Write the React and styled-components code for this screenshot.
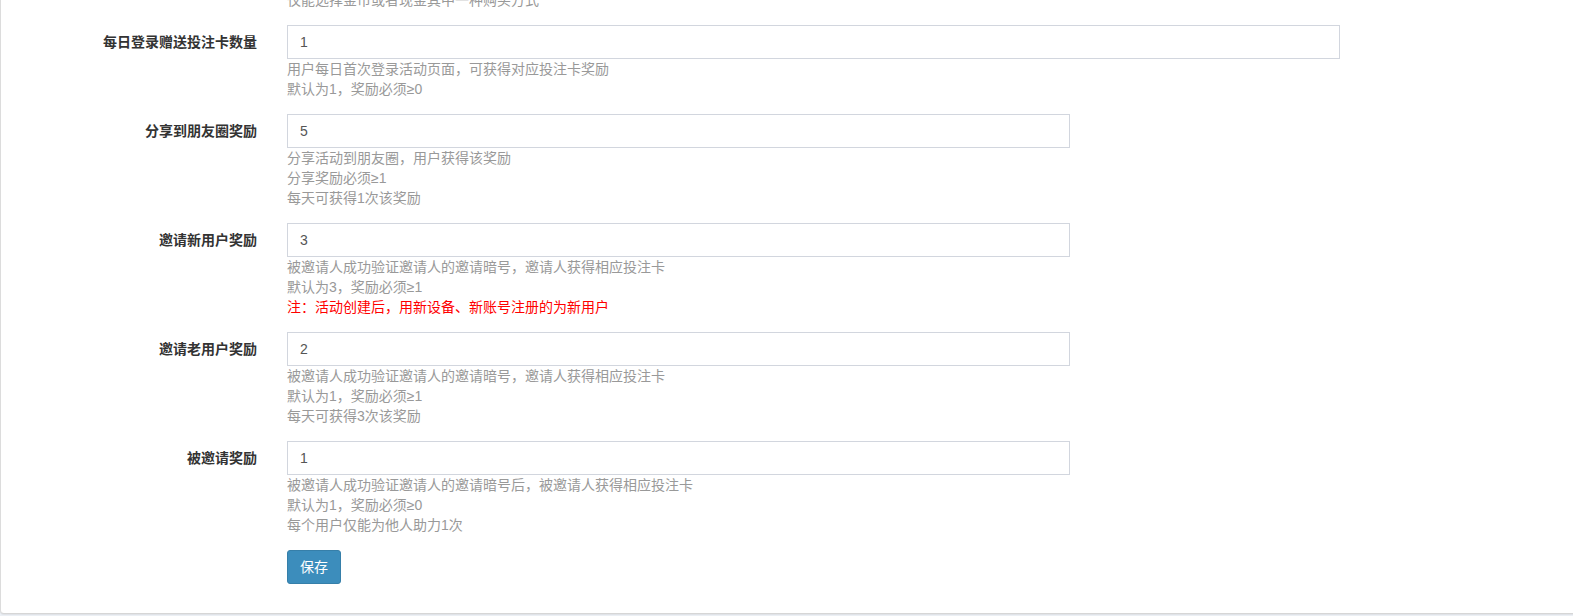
import styled, { createGlobalStyle } from "styled-components";

const GlobalStyle = createGlobalStyle`
  html, body {
    margin: 0;
    padding: 0;
    background: #ecf0f5;
    overflow: hidden;
  }
  body {
    font-family: "Liberation Sans", "Noto Sans CJK SC", sans-serif;
    font-size: 14px;
    color: #333;
  }
`;

const Page = styled.div`
  height: 616px;
  overflow: hidden;
`;

const Box = styled.div`
  width: 1640px;
  margin-top: -10px;
  padding-bottom: 14px;
  background: #fff;
  border-left: 1px solid #dcdcdc;
  border-bottom: 1px solid #d6d6d6;
  border-radius: 0 0 4px 4px;
  box-shadow: 0 1px 1px rgba(0, 0, 0, 0.06);
`;

const FormGroup = styled.div`
  display: flex;
  align-items: flex-start;
  margin-bottom: 15px;
`;

const Label = styled.label`
  flex: 0 0 256px;
  box-sizing: border-box;
  padding-top: 7px;
  text-align: right;
  font-weight: 700;
  line-height: 20px;
  color: #333;
`;

const Control = styled.div`
  margin-left: 30px;
  width: ${(p) => p.$width}px;
`;

const Input = styled.input`
  display: block;
  box-sizing: border-box;
  width: 100%;
  height: 34px;
  padding: 6px 12px;
  border: 1px solid #d2d6de;
  border-radius: 0;
  font-family: inherit;
  font-size: 14px;
  color: #555;
  outline: none;
`;

const Help = styled.div`
  line-height: 20px;
  color: ${(p) => (p.$warn ? "#ff0000" : "#999")};
`;

const Button = styled.button`
  padding: 6px 12px;
  height: 34px;
  font-family: inherit;
  font-size: 14px;
  line-height: 20px;
  color: #fff;
  background: #3c8dbc;
  border: 1px solid #367fa9;
  border-radius: 3px;
  cursor: pointer;
`;

const fields = [
  {
    label: "每日登录赠送投注卡数量",
    value: "1",
    width: 1053,
    help: ["用户每日首次登录活动页面，可获得对应投注卡奖励", "默认为1，奖励必须≥0"],
  },
  {
    label: "分享到朋友圈奖励",
    value: "5",
    width: 783,
    help: ["分享活动到朋友圈，用户获得该奖励", "分享奖励必须≥1", "每天可获得1次该奖励"],
  },
  {
    label: "邀请新用户奖励",
    value: "3",
    width: 783,
    help: ["被邀请人成功验证邀请人的邀请暗号，邀请人获得相应投注卡", "默认为3，奖励必须≥1"],
    warn: "注：活动创建后，用新设备、新账号注册的为新用户",
  },
  {
    label: "邀请老用户奖励",
    value: "2",
    width: 783,
    help: ["被邀请人成功验证邀请人的邀请暗号，邀请人获得相应投注卡", "默认为1，奖励必须≥1", "每天可获得3次该奖励"],
  },
  {
    label: "被邀请奖励",
    value: "1",
    width: 783,
    help: ["被邀请人成功验证邀请人的邀请暗号后，被邀请人获得相应投注卡", "默认为1，奖励必须≥0", "每个用户仅能为他人助力1次"],
  },
];

const App = () => {
  return (
    <Page>
      <GlobalStyle />
      <Box>
        <FormGroup>
          <Label />
          <Control $width={783}>
            <Help>仅能选择金币或者现金其中一种购买方式</Help>
          </Control>
        </FormGroup>
        {fields.map((f) => (
          <FormGroup key={f.label}>
            <Label>{f.label}</Label>
            <Control $width={f.width}>
              <Input defaultValue={f.value} />
              {f.help.map((h) => (
                <Help key={h}>{h}</Help>
              ))}
              {f.warn && <Help $warn>{f.warn}</Help>}
            </Control>
          </FormGroup>
        ))}
        <FormGroup>
          <Label />
          <Control $width={783}>
            <Button>保存</Button>
          </Control>
        </FormGroup>
      </Box>
    </Page>
  );
};

export default App;
